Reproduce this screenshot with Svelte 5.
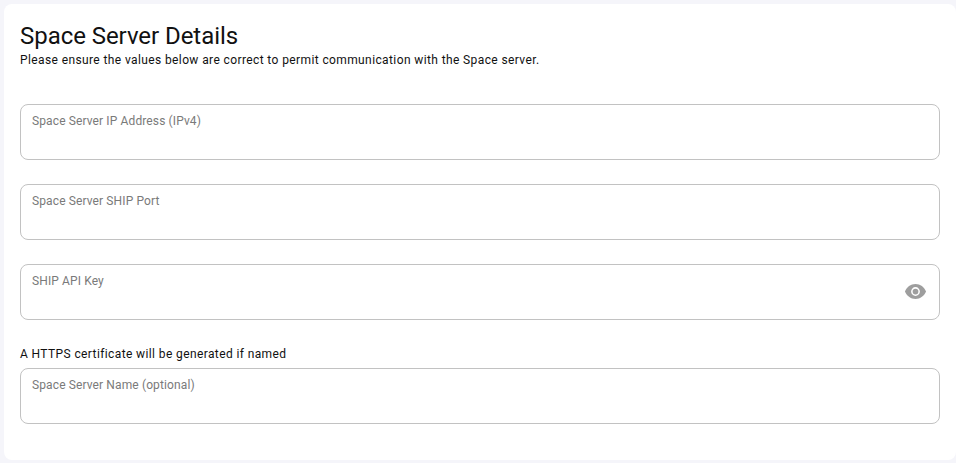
<script>
	const upper = [
		{ label: 'Space Server IP Address (IPv4)' },
		{ label: 'Space Server SHIP Port' },
		{ label: 'SHIP API Key', secret: true }
	];
</script>

<div class="page">
	<section class="card">
		<h1>Space Server Details</h1>
		<p class="hint">Please ensure the values below are correct to permit communication with the Space server.</p>

		<div class="fields">
			{#each upper as field}
				<div class="field">
					<span class="label">{field.label}</span>
					{#if field.secret}
						<svg class="eye" viewBox="0 0 24 24" aria-hidden="true">
							<path fill-rule="evenodd" d="M12 4.2C7 4.2 2.73 7.5 1 12c1.73 4.5 6 7.8 11 7.8s9.27-3.3 11-7.8c-1.73-4.5-6-7.8-11-7.8zM12 16.6a4.6 4.6 0 1 1 0-9.2 4.6 4.6 0 0 1 0 9.2zM12 9a3 3 0 1 0 0 6 3 3 0 0 0 0-6z" />
						</svg>
					{/if}
				</div>
			{/each}
		</div>

		<p class="hint named">A HTTPS certificate will be generated if named</p>
		<div class="field">
			<span class="label">Space Server Name (optional)</span>
		</div>
	</section>
</div>

<style>
	:global(body) {
		margin: 0;
		background: #f5f5fa;
	}
	.page {
		height: 463px;
		padding: 4px 0 3px 4px;
		box-sizing: border-box;
		font-family: Roboto, "Liberation Sans", sans-serif;
		overflow: hidden;
	}
	.card {
		height: 100%;
		box-sizing: border-box;
		background: #fff;
		border-radius: 8px;
		padding: 16px 16px 0;
	}
	h1 {
		margin: 0;
		font-size: 24px;
		font-weight: 400;
		line-height: 32px;
		letter-spacing: -0.05px;
		color: #111;
	}
	.hint {
		margin: 0;
		font-size: 12px;
		line-height: 16px;
		letter-spacing: 0.39px;
		color: #111;
	}
	.fields {
		display: flex;
		flex-direction: column;
		gap: 24px;
		margin-top: 36px;
	}
	.field {
		position: relative;
		height: 56px;
		box-sizing: border-box;
		border: 1px solid #c2c2c2;
		border-radius: 8px;
		padding: 8px 11px;
	}
	.label {
		display: block;
		font-size: 12px;
		line-height: 16px;
		letter-spacing: 0.12px;
		color: #7a7a7a;
	}
	.named {
		margin-top: 26px;
		margin-bottom: 6px;
	}
	.eye {
		position: absolute;
		right: 12px;
		top: 15px;
		width: 23px;
		height: 23px;
		fill: #9e9e9e;
	}
</style>
